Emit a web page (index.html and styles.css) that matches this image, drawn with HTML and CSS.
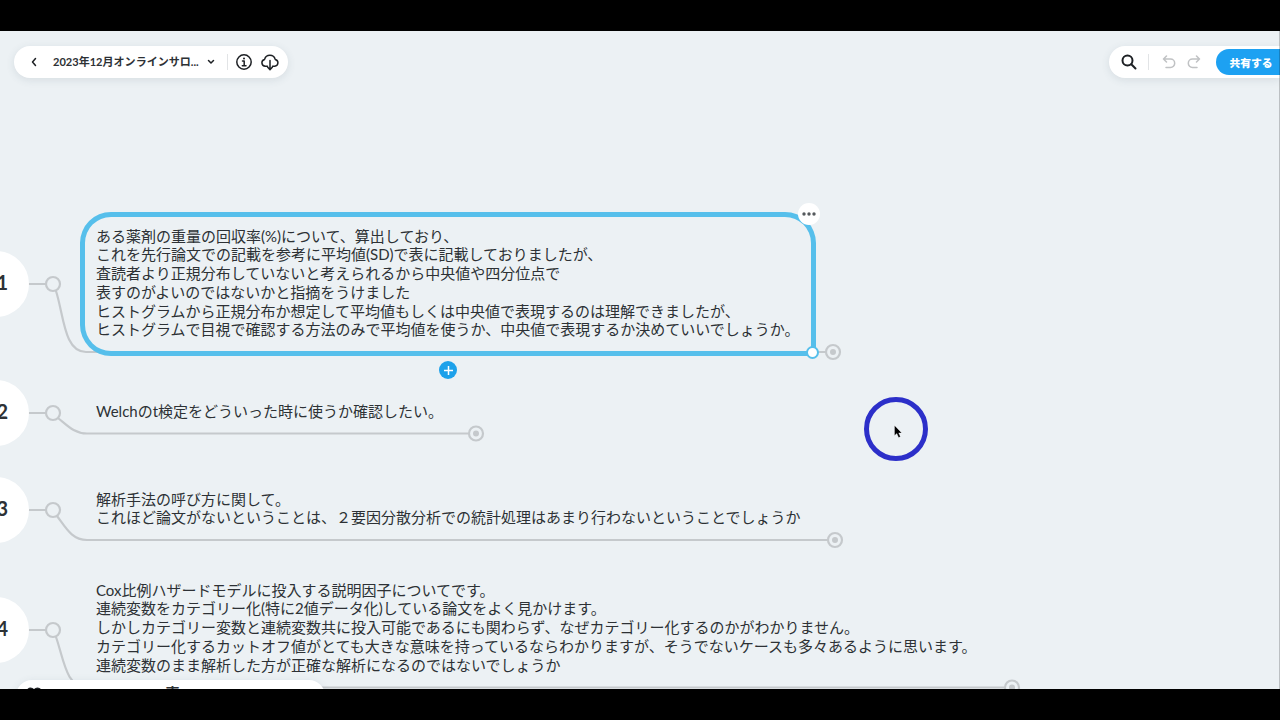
FILE: index.html
```
<!DOCTYPE html>
<html lang="ja">
<head>
  <meta charset="UTF-8" />
  <meta name="viewport" content="width=device-width, initial-scale=1.0"/>
  <title>2023年12月オンラインサロン</title>
  <link rel="stylesheet" href="styles.css">
</head>
<body>
<main class="stage">
  <!-- Mind map canvas -->
  <div class="canvas">
    <svg class="links" width="1280" height="658" viewBox="0 31 1280 658">
      <g class="link">
        <path d="M28 284H46M56 291C64 316 64 352 86 352H825" />
        <path d="M28 413H46M58 418C67 425 74 433.500 87 433.500H468" />
        <path d="M28 510H46M57 516C66 528 72 540 87 540H827" />
        <path d="M28 630H46M56 637C64 660 66 687.500 87 687.500H1004" />
      </g>
      <g class="joint">
        <circle cx="53" cy="284" r="7" />
        <circle cx="53" cy="413" r="7" />
        <circle cx="53" cy="510" r="7" />
        <circle cx="53" cy="630" r="7" />
        <circle cx="833" cy="352" r="7" />
        <circle cx="476" cy="433.500" r="7" />
        <circle cx="835" cy="540" r="7" />
        <circle cx="1012" cy="687.500" r="7" />
      </g>
      <g class="dot">
        <circle cx="833" cy="352" r="3" />
        <circle cx="476" cy="433.500" r="3" />
        <circle cx="835" cy="540" r="3" />
        <circle cx="1012" cy="687.500" r="3" />
      </g>
    </svg>

    <div class="number n1">1</div>
    <div class="number n2">2</div>
    <div class="number n3">3</div>
    <div class="number n4">4</div>

    <div class="selection">
      <button class="more" aria-label="メニュー">
        <svg width="14" height="4" viewBox="0 0 14 4"><circle cx="2" cy="2" r="1.700"/><circle cx="7" cy="2" r="1.700"/><circle cx="12" cy="2" r="1.700"/></svg>
      </button>
      <button class="add" aria-label="追加">
        <svg width="9" height="9" viewBox="0 0 9 9"><path d="M4.500 0V9M0 4.500H9"/></svg>
      </button>
      <span class="handle"></span>
    </div>

    <div class="topic t1">
      <p>ある薬剤の重量の回収率(%)について、算出しており、</p>
      <p>これを先行論文での記載を参考に平均値(SD)で表に記載しておりましたが、</p>
      <p>査読者より正規分布していないと考えられるから中央値や四分位点で</p>
      <p>表すのがよいのではないかと指摘をうけました</p>
      <p>ヒストグラムから正規分布か想定して平均値もしくは中央値で表現するのは理解できましたが、</p>
      <p>ヒストグラムで目視で確認する方法のみで平均値を使うか、中央値で表現するか決めていいでしょうか。</p>
    </div>
    <div class="topic t2">
      <p>Welchのt検定をどういった時に使うか確認したい。</p>
    </div>
    <div class="topic t3">
      <p>解析手法の呼び方に関して。</p>
      <p>これほど論文がないということは、２要因分散分析での統計処理はあまり行わないということでしょうか</p>
    </div>
    <div class="topic t4">
      <p>Cox比例ハザードモデルに投入する説明因子についてです。</p>
      <p>連続変数をカテゴリー化(特に2値データ化)している論文をよく見かけます。</p>
      <p>しかしカテゴリー変数と連続変数共に投入可能であるにも関わらず、なぜカテゴリー化するのかがわかりません。</p>
      <p>カテゴリー化するカットオフ値がとても大きな意味を持っているならわかりますが、そうでないケースも多々あるように思います。</p>
      <p>連続変数のまま解析した方が正確な解析になるのではないでしょうか</p>
    </div>

    <div class="pointer">
      <svg width="8" height="13" viewBox="0 0 8 13"><path d="M0.500 0.500V10.500L2.800 8.500L4.600 12.500L6.400 11.700L4.700 7.900H7.700Z"/></svg>
    </div>
  </div>

  <header class="toolbar">
    <nav class="pill title-bar">
      <svg class="back" width="6" height="10" viewBox="0 0 6 10"><path d="M4.500 1.500L1.500 5L4.500 8.500"/></svg>
      <span class="title">2023年12月オンラインサロ...</span>
      <svg class="caret" width="8" height="6" viewBox="0 0 8 6"><path d="M1.500 1.500L4 4L6.500 1.500"/></svg>
      <span class="divider"></span>
      <svg class="info" width="16" height="16" viewBox="0 0 16 16"><circle cx="8" cy="8" r="7.200"/><path d="M6.500 7H8.200V11.500M6.300 11.700H10"/><circle class="fill" cx="8" cy="4.500" r="1"/></svg>
      <svg class="cloud" width="18" height="17" viewBox="0 0 18 17"><path d="M6.500 12.300H4.300A3.500 3.500 0 0 1 3.600 5.400A5.500 5.500 0 0 1 14.200 5.400A3.500 3.500 0 0 1 13.700 12.300H11.500M9 6.500V15.500M6.700 13.300L9 15.600L11.300 13.300"/></svg>
    </nav>
    <nav class="pill action-bar">
      <svg class="search" width="16" height="16" viewBox="0 0 16 16"><circle cx="6.500" cy="6.500" r="5"/><path d="M10.300 10.300L14.500 14.500"/></svg>
      <span class="divider"></span>
      <svg class="history" width="14" height="14" viewBox="0 0 14 14"><path d="M4.500 1L1.500 4L4.500 7M1.500 4H8.500A4.200 4.200 0 0 1 8.500 12.400H4"/></svg>
      <svg class="history redo" width="14" height="14" viewBox="0 0 14 14"><path d="M9.500 1L12.500 4L9.500 7M12.500 4H5.500A4.200 4.200 0 0 0 5.500 12.400H10"/></svg>
      <button class="share">共有する</button>
    </nav>
  </header>

  <footer class="pill bottom-bar">
    <svg class="brand" width="16" height="12" viewBox="0 0 16 12"><path d="M2 11V4.500A2.500 2.500 0 0 1 7 4.500V11M9 11V4.500A2.500 2.500 0 0 1 14 4.500V11"/></svg>
    <span class="view">表</span>
  </footer>
</main>
</body>
</html>
```
FILE: styles.css
```
body {
  margin: 0;
  padding: 31px 0;
  height: 658px;
  background-color: #000;
  color: #2d3135;
  font-family: Lato, 'Noto Sans CJK JP', sans-serif;
  overflow: hidden;
}

.stage {
  position: relative;
  height: 658px;
  background-color: #ecf1f4;
  overflow: hidden;
}

/* window edge */
.stage::after {
  content: '';
  position: absolute;
  top: 0;
  right: 0;
  width: 1px;
  height: 100%;
  background-color: rgba(0, 0, 0, 0.2);
}

.canvas,
.links {
  position: absolute;
  top: 0;
  left: 0;
  width: 1280px;
  height: 658px;
}

svg {
  display: block;
  flex: none;
  fill: none;
  stroke: #1d2024;
  stroke-width: 1.5;
  stroke-linecap: round;
  stroke-linejoin: round;
}

button {
  border: none;
  padding: 0;
  cursor: pointer;
}

/* Connectors */
.link {
  stroke: #c5c9cc;
  stroke-width: 2.2;
}

.joint {
  fill: #ecf1f4;
  stroke: #c5c9cc;
  stroke-width: 2.2;
}

.dot {
  fill: #c5c9cc;
  stroke: none;
}

/* Numbered branches */
.number {
  position: absolute;
  left: -37px;
  width: 66px;
  height: 66px;
  border-radius: 50%;
  background-color: #fff;
  box-sizing: border-box;
  padding-right: 21px;
  text-align: right;
  font: bold 20px/62px Lato, sans-serif;
}

.n1 { top: 220px; }
.n2 { top: 349px; }
.n3 { top: 446px; }
.n4 { top: 566px; }

/* Topics */
.topic {
  position: absolute;
  left: 96px;
  font-size: 15px;
  line-height: 18.4px;
  white-space: nowrap;
}

.topic p {
  margin: 0;
}

.topic p:nth-child(4) {
  margin-top: 1px;
}

.t1 { top: 196px; }
.t2 { top: 371px; }
.t3 { top: 459px; }
.t4 { top: 550px; }

.selection {
  position: absolute;
  left: 80px;
  top: 181px;
  width: 736px;
  height: 144px;
  box-sizing: border-box;
  border: 5px solid #56bfeb;
  border-radius: 31px 31px 4px 31px;
}

.more,
.add,
.handle {
  position: absolute;
  display: flex;
  align-items: center;
  justify-content: center;
  border-radius: 50%;
}

.more {
  right: -9px;
  top: -14px;
  width: 22px;
  height: 22px;
  background-color: #fff;
}

.more svg {
  fill: #55595d;
  stroke: none;
}

.add {
  left: 354px;
  top: 144px;
  width: 18px;
  height: 18px;
  background-color: #1da1ea;
}

.add svg {
  stroke: #fff;
}

.handle {
  right: -8px;
  bottom: -8px;
  width: 9px;
  height: 9px;
  border: 2px solid #56bfeb;
  background-color: #fff;
}

.pointer {
  position: absolute;
  left: 864px;
  top: 366px;
  width: 54px;
  height: 54px;
  border: 5px solid #2c2fc9;
  border-radius: 50%;
}

.pointer svg {
  margin: 23px 0 0 25px;
  fill: #000;
  stroke: #fff;
  stroke-width: 0.3;
}

/* Toolbars */
.toolbar {
  position: relative;
  display: flex;
  justify-content: space-between;
  padding: 15px 0 0 14px;
}

.pill {
  display: flex;
  align-items: center;
  height: 32px;
  border-radius: 16px;
  background-color: #fff;
  box-shadow: 0 2px 8px rgba(60, 80, 100, 0.12);
}

.title-bar {
  width: 274px;
}

.back {
  margin-left: 17px;
}

.title {
  width: 147px;
  margin-left: 16px;
  font-size: 11.05px;
  font-weight: bold;
  line-height: 14px;
  padding-bottom: 1px;
  white-space: nowrap;
}

.caret {
  margin-left: 7px;
}

.divider {
  width: 1px;
  height: 16px;
  background-color: #e2e4e6;
}

.title-bar .divider {
  margin-left: 12px;
}

.info {
  margin-left: 8px;
}

.info .fill {
  fill: #1d2024;
  stroke: none;
}

.cloud {
  margin-left: 9px;
}

.action-bar {
  width: 171px;
  border-radius: 16px 0 0 16px;
}

.search {
  margin-left: 12px;
  stroke-width: 2;
}

.action-bar .divider {
  margin-left: 11px;
}

.history {
  margin-left: 13px;
  stroke: #c0c2c4;
}

.redo {
  margin-left: 11px;
}

.share {
  width: 65px;
  height: 26px;
  margin-left: 15px;
  padding-left: 6px;
  border-radius: 13px 0 0 13px;
  background-color: #1da1f2;
  color: #fff;
  font: 900 10.75px 'Noto Sans CJK JP', sans-serif;
  white-space: nowrap;
}

.bottom-bar {
  position: absolute;
  left: 16px;
  top: 649px;
  width: 309px;
  align-items: flex-start;
  font-size: 15px;
  font-weight: bold;
  line-height: 26px;
}

.brand {
  margin: 7px 123px 0 10px;
  stroke-width: 3;
}
```
